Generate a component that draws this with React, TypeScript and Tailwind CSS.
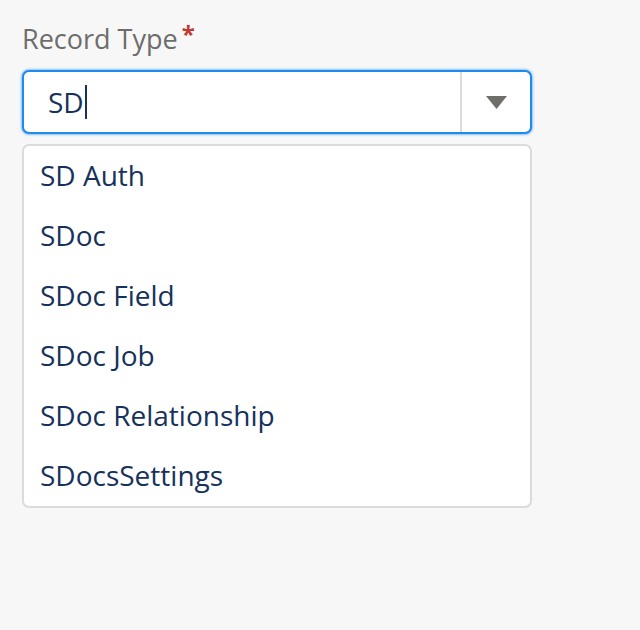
import { useState } from 'react'

const options = ['SD Auth', 'SDoc', 'SDoc Field', 'SDoc Job', 'SDoc Relationship', 'SDocsSettings']

export default function App() {
  const [query] = useState('SD')

  return (
    <div className="min-h-[630px] w-[640px] bg-[#f7f7f7] pt-[21px] pl-[22px] font-['Open_Sans',sans-serif]">
      <div className="w-[510px]">
        <label className="flex items-start text-[27px] leading-[36px] text-[#6d6d6d]">
          Record Type
          <span className="ml-[4px] text-[24px] font-bold leading-[26px] text-[#c23934]">*</span>
        </label>
        <div className="mt-[13px] flex h-[64px] items-stretch rounded-[7px] border-2 border-[#1f8bef] bg-white shadow-[0_0_3px_#1589ee]">
          <div className="flex flex-1 items-center pl-[24px] text-[28px] text-[#16325c]">
            <span>{query}</span>
            <span className="ml-[1px] h-[34px] w-[2px] bg-[#16325c]" />
          </div>
          <div className="w-[2px] bg-[#dddbda]" />
          <div className="flex w-[68px] items-center justify-center">
            <svg width="21" height="13" viewBox="0 0 21 13">
              <path d="M0 0h21L10.5 13z" fill="#706e6b" />
            </svg>
          </div>
        </div>
        <ul className="mt-[10px] rounded-[7px] border-2 border-[#dddbda] bg-white">
          {options.map((o) => (
            <li key={o} className="flex h-[60px] items-center pl-[16px] pb-[2px] text-[28px] text-[#16325c]">
              {o}
            </li>
          ))}
        </ul>
      </div>
    </div>
  )
}
